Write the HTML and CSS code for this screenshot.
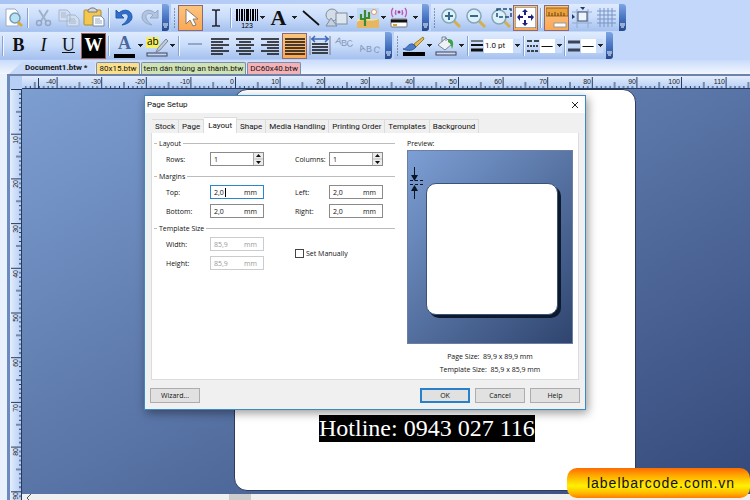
FILE: index.html
```html
<!DOCTYPE html>
<html lang="en">
<head>
    <meta charset="UTF-8">
    <meta name="viewport" content="width=device-width, initial-scale=1.0">
    <title>Page Setup</title>
    <link rel="stylesheet" href="styles.css">
</head>
<body>
    <header class="toolbars">
        <div class="toolbar-row">
            <div class="toolbar">
                <button class="tool" aria-label="Print preview"><svg width="22" height="22" viewBox="0 0 22 22"><path d="M4 2h9l3 3v14H4z" fill="#fff" stroke="#9aabc4"/><circle cx="13" cy="11" r="5" fill="#b5e3f3" stroke="#7899b4" stroke-width="1.5"/><path d="M16 15l4 4" stroke="#d9a93a" stroke-width="2.5"/></svg></button>
                <span class="sep"></span>
                <button class="tool" aria-label="Cut"><svg width="22" height="22" viewBox="0 0 22 22"><path d="M6 3l7 11M15 3L8 14" stroke="#9fb2cc" stroke-width="2"/><circle cx="6" cy="16" r="2.5" fill="none" stroke="#93a6c2" stroke-width="1.5"/><circle cx="15" cy="16" r="2.5" fill="none" stroke="#93a6c2" stroke-width="1.5"/></svg></button>
                <button class="tool" aria-label="Copy"><svg width="22" height="22" viewBox="0 0 22 22"><path d="M1 3h8l3 3v8H1zM9 8h8l4 4v7H9z" fill="#d3dff0" stroke="#a5b6cf"/><path d="M3 6h5M3 8h5M3 10h5M11 12h6M11 14h7M11 16h7" stroke="#a5b6cf"/></svg></button>
                <button class="tool" aria-label="Paste"><svg width="22" height="22" viewBox="0 0 22 22"><rect x="1" y="3" width="17" height="15" rx="1" fill="#f3c84d" stroke="#ae8a38"/><path d="M5 5V3l3-2h3l3 2v2z" fill="#d6d7dc" stroke="#77787d"/><path d="M10 9h8l3 3v7H10z" fill="#fff" stroke="#7489a8"/><path d="M12 12h5M12 14h7M12 16h7" stroke="#93a5c0"/></svg></button>
                <span class="sep"></span>
                <button class="tool" aria-label="Undo"><svg width="22" height="22" viewBox="0 0 22 22"><path d="M2 3v8h8L7 8c4-3 8-1 7 3-1 3-3 5-6 7 6-1 10-4 10-8 0-7-8-9-13-4z" fill="#2f6fcb" stroke="#2259ad"/></svg></button>
                <button class="tool" aria-label="Redo"><svg width="22" height="22" viewBox="0 0 22 22"><path d="M19 3v8h-8l3-3c-4-3-8-1-7 3 1 3 3 5 6 7-6-1-10-4-10-8 0-7 8-9 13-4z" fill="#b2c4de" stroke="#94a9c8"/></svg></button>
                <button class="more" aria-label="Toolbar options"><svg width="7" height="6" viewBox="0 0 7 6"><path d="M1 0h5M1 2h5M2 4h3" stroke="#fff"/></svg></button>
            </div>
            <div class="toolbar">
                <span class="grip"></span>
                <button class="tool active" aria-label="Select"><svg width="22" height="22" viewBox="0 0 22 22"><path d="M6 2v15l4-4 3 6 3-1-3-6h5z" fill="#fff" stroke="#8b7b70"/></svg></button>
                <button class="tool" aria-label="Text select"><svg width="22" height="22" viewBox="0 0 22 22"><path d="M7 3h3l1 1 1-1h3M7 19h3l1-1 1 1h3M11 4v14" fill="none" stroke="#223" stroke-width="1.6"/></svg></button>
                <span class="sep"></span>
                <button class="tool" aria-label="Barcode"><svg width="24" height="22" viewBox="0 0 24 22"><path d="M1 2h2v12H1zM4 2h1v12H4zM6 2h2v12H6zM9 2h1v12H9zM11 2h3v12h-3zM15 2h1v12h-1zM17 2h2v12h-2zM20 2h1v12h-1zM22 2h1v12h-1z"/><text x="12" y="21" text-anchor="middle" class="icon-digits">123</text></svg></button>
                <button class="drop" aria-label="Barcode types"></button>
                <button class="tool letter" aria-label="Text">A</button>
                <button class="drop" aria-label="Text types"></button>
                <button class="tool" aria-label="Line"><svg width="22" height="22" viewBox="0 0 22 22"><path d="M3 4l16 14" stroke="#111" stroke-width="1.7"/></svg></button>
                <button class="tool" aria-label="Shapes"><svg width="24" height="22" viewBox="0 0 24 22"><circle cx="8" cy="8" r="6" fill="#d3dde8" stroke="#7f8d9f"/><path d="M2 19l5-8 6 8z" fill="#c5d1df" stroke="#7f8d9f"/><rect x="12" y="6" width="11" height="11" fill="#dde5ee" stroke="#7f8d9f"/></svg></button>
                <button class="drop" aria-label="Shape types"></button>
                <button class="tool" aria-label="Picture"><svg width="22" height="22" viewBox="0 0 22 22"><rect x="0" y="1" width="22" height="20" fill="#f8dc9c"/><rect x="0" y="1" width="22" height="11" fill="#bfd9f2"/><path d="M0 15c7-4 14 1 22-3v9H0z" fill="#e6b762"/><circle cx="17" cy="5" r="2.5" fill="#fff" stroke="#f08d60"/><path d="M8 19V3M4 7v5h4M12 5v6H8" fill="none" stroke="#398a35" stroke-width="2.2"/></svg></button>
                <button class="drop" aria-label="Picture types"></button>
                <button class="tool" aria-label="Encoder"><svg width="22" height="22" viewBox="0 0 22 22"><path d="M4 1c-2 3-2 6 0 9M7 3c-1 2-1 3 0 5M16 1c2 3 2 6 0 9M13 3c1 2 1 3 0 5" fill="none" stroke="#c05ab8" stroke-width="1.4"/><circle cx="10" cy="5" r="1.5" fill="#a13b98"/><rect x="2" y="12" width="16" height="8" rx="1" fill="#fff" stroke="#777"/><path d="M2 14h16" stroke="#111" stroke-width="3"/><path d="M4 18h4" stroke="#d2a339" stroke-width="2"/></svg></button>
                <button class="drop" aria-label="Encoder types"></button>
                <button class="more push" aria-label="Toolbar options"><svg width="7" height="6" viewBox="0 0 7 6"><path d="M1 0h5M1 2h5M2 4h3" stroke="#fff"/></svg></button>
            </div>
            <div class="toolbar">
                <span class="grip"></span>
                <button class="tool" aria-label="Zoom in"><svg width="22" height="22" viewBox="0 0 22 22"><path d="M13 13l7 7" stroke="#d6ae4c" stroke-width="3"/><circle cx="9" cy="9" r="7" fill="#dcf0f8" stroke="#84a6b8" stroke-width="1.5"/><path d="M5 9h8M9 5v8" stroke="#356a8e" stroke-width="2"/></svg></button>
                <button class="tool" aria-label="Zoom out"><svg width="22" height="22" viewBox="0 0 22 22"><path d="M13 13l7 7" stroke="#d6ae4c" stroke-width="3"/><circle cx="9" cy="9" r="7" fill="#dcf0f8" stroke="#84a6b8" stroke-width="1.5"/><path d="M5 9h8" stroke="#356a8e" stroke-width="2"/></svg></button>
                <button class="tool" aria-label="Zoom to selection"><svg width="22" height="22" viewBox="0 0 22 22"><path d="M13 13l7 7" stroke="#d6ae4c" stroke-width="3"/><circle cx="9" cy="10" r="7" fill="#dcf0f8" stroke="#84a6b8" stroke-width="1.5"/><rect x="7" y="2" width="14" height="8" fill="none" stroke="#234c78" stroke-width="1.5" stroke-dasharray="4 2"/></svg></button>
                <button class="tool active" aria-label="Fit in window"><svg width="21" height="21" viewBox="0 0 21 21"><rect width="21" height="21" fill="#fff" stroke="#555"/><path d="M10 2l3 3h-2v3H9V5H7zM10 19l3-3h-2v-3H9v3H7zM2 10l3-3v2h3v2H5v3zM19 10l-3-3v2h-3v2h3v3z" fill="#20207c"/></svg></button>
                <span class="sep"></span>
                <button class="tool active" aria-label="Rulers"><svg width="22" height="22" viewBox="0 0 22 22"><rect x="0" y="1" width="22" height="8" fill="#e9a13c" stroke="#9b6222"/><path d="M3 5v4M6 6v3M9 5v4M12 6v3M15 5v4M18 6v3" stroke="#6c4113"/><rect x="8" y="16" width="12" height="4" fill="#fff" stroke="#999"/></svg></button>
                <button class="tool" aria-label="Snap"><svg width="22" height="22" viewBox="0 0 22 22"><path d="M6 2v19M17 2v19M1 5h20M1 16h20" stroke="#94a9ce"/><rect x="7" y="5" width="9" height="9" fill="#eef4fd" stroke="#3c4a68"/><path d="M9 0h5l-2 3zM1 7v5l3-2z" fill="#223b6a"/></svg></button>
                <button class="tool" aria-label="Grid"><svg width="22" height="22" viewBox="0 0 22 22"><path d="M4 1v19M8 1v19M12 1v19M16 1v19M1 4h19M1 8h19M1 12h19M1 16h19" stroke="#7994c4"/></svg></button>
                <button class="more" aria-label="Toolbar options"><svg width="7" height="6" viewBox="0 0 7 6"><path d="M1 0h5M1 2h5M2 4h3" stroke="#fff"/></svg></button>
            </div>
        </div>

        <div class="toolbar-row">
            <div class="toolbar">
                <span class="sep"></span>
                <button class="tool format">B</button>
                <button class="tool format thin"><i>I</i></button>
                <button class="tool format thin underline">U</button>
                <button class="tool format inverse">W</button>
                <span class="sep"></span>
                <button class="tool format swatch" aria-label="Text color">A</button>
                <button class="drop" aria-label="Text colors"></button>
                <button class="tool" aria-label="Highlight"><svg width="24" height="22" viewBox="0 0 24 22"><rect x="1" y="2" width="13" height="11" fill="#f4f060"/><text x="2" y="10" class="icon-ab">ab</text><path d="M21 4l-8 9-2 4 4-2 8-9z" fill="#c3cbd5" stroke="#7d8795"/><rect x="2" y="18" width="20" height="3" fill="#bfd3f5" stroke="#445"/></svg></button>
                <button class="drop" aria-label="Highlight colors"></button>
                <span class="sep"></span>
                <button class="tool" aria-label="Rule"><svg width="22" height="22" viewBox="0 0 22 22"><path d="M4 9h14" stroke="#7d93bb" stroke-width="1.5"/></svg></button>
                <button class="tool" aria-label="Align left"><svg width="22" height="22" viewBox="0 0 22 22"><path d="M2 4h18M2 7h12M2 10h18M2 13h12M2 16h18M2 19h12" stroke="#111" stroke-width="1.5"/></svg></button>
                <button class="tool" aria-label="Align center"><svg width="22" height="22" viewBox="0 0 22 22"><path d="M2 4h18M5 7h12M2 10h18M5 13h12M2 16h18M5 19h12" stroke="#111" stroke-width="1.5"/></svg></button>
                <button class="tool" aria-label="Align right"><svg width="22" height="22" viewBox="0 0 22 22"><path d="M2 4h18M8 7h12M2 10h18M8 13h12M2 16h18M8 19h12" stroke="#111" stroke-width="1.5"/></svg></button>
                <button class="tool active" aria-label="Justify"><svg width="22" height="22" viewBox="0 0 22 22"><path d="M1 4h20M1 7h20M1 10h20M1 13h20M1 16h20M1 19h20" stroke="#111" stroke-width="1.5"/></svg></button>
                <button class="tool" aria-label="Fit width"><svg width="22" height="22" viewBox="0 0 22 22"><path d="M1 1v19M21 1v19" stroke="#778"/><path d="M2 4h18M6 1L3 4l3 3M16 1l3 3-3 3" fill="none" stroke="#3b67bd" stroke-width="1.5"/><path d="M3 9h16M3 12h16M3 15h16M3 18h16" stroke="#111" stroke-width="1.5"/></svg></button>
                <button class="tool" aria-label="Arc text down"><svg width="22" height="22" viewBox="0 0 22 22" class="icon-arc"><text x="1" y="8" transform="rotate(14 1 8)">A</text><text x="7" y="11">B</text><text x="13" y="12" transform="rotate(-8 13 12)">C</text></svg></button>
                <button class="tool" aria-label="Arc text up"><svg width="22" height="22" viewBox="0 0 22 22" class="icon-arc"><text x="1" y="17" transform="rotate(-18 1 17)">A</text><text x="7" y="17">B</text><text x="14" y="17" transform="rotate(12 14 17)">C</text></svg></button>
                <button class="more push" aria-label="Toolbar options"><svg width="7" height="6" viewBox="0 0 7 6"><path d="M1 0h5M1 2h5M2 4h3" stroke="#fff"/></svg></button>
            </div>
            <div class="toolbar">
                <span class="grip"></span>
                <button class="tool" aria-label="Line color"><svg width="24" height="22" viewBox="0 0 24 22"><path d="M12 9l9-7 1 2-8 8z" fill="#e6bb55" stroke="#9e7a2c"/><path d="M1 14c4 0 5-6 10-5l3 3c-3 4-8 4-13 2z" fill="#4d7cc6" stroke="#305a9e"/><path d="M1 17h22v4H1z"/></svg></button>
                <button class="drop" aria-label="Line colors"></button>
                <button class="tool" aria-label="Fill color"><svg width="24" height="22" viewBox="0 0 24 22"><path d="M4 10l8-7 6 6-7 6z" fill="#eef2f6" stroke="#7a8797"/><path d="M8 7V2h4v4" fill="none" stroke="#7a8797"/><path d="M14 4c6 0 6 5 4 10-1-5-2-6-4-7z" fill="#3da14b"/><rect x="2" y="17" width="20" height="3" fill="#c8daf7" stroke="#445"/></svg></button>
                <button class="drop" aria-label="Fill colors"></button>
                <span class="sep"></span>
                <label class="combo">
                    <svg width="12" height="14" viewBox="0 0 12 14"><path d="M0 2h12" stroke="#111"/><path d="M0 6h12" stroke="#111" stroke-width="2"/><path d="M0 11h12" stroke="#111" stroke-width="3"/></svg>
                    <select class="wide" aria-label="Line thickness"><option>1.0 pt</option></select>
                </label>
                <span class="sep"></span>
                <label class="combo">
                    <svg width="12" height="14" viewBox="0 0 12 14"><path d="M0 2h12" stroke="#111" stroke-width="1.5" stroke-dasharray="5 2"/><path d="M0 7h12" stroke="#111" stroke-width="1.5" stroke-dasharray="2 1"/><path d="M0 12h12" stroke="#111" stroke-width="1.5" stroke-dasharray="3 1"/></svg>
                    <select aria-label="Dash style"><option>—</option></select>
                </label>
                <span class="sep"></span>
                <label class="combo">
                    <svg width="12" height="14" viewBox="0 0 12 14"><path d="M0 3h12M0 11h12" stroke="#3c4558" stroke-width="3"/></svg>
                    <select aria-label="Compound style"><option>—</option></select>
                </label>
                <button class="more push" aria-label="Toolbar options"><svg width="7" height="6" viewBox="0 0 7 6"><path d="M1 0h5M1 2h5M2 4h3" stroke="#fff"/></svg></button>
            </div>
        </div>
    </header>

    <nav class="doc-tabs">
        <a href="#" class="doc-tab current">Document1.btw *</a>
        <a href="#" class="doc-tab yellow">80x15.btw</a>
        <a href="#" class="doc-tab green">tem dán thùng an thành.btw</a>
        <a href="#" class="doc-tab red">DC60x40.btw</a>
    </nav>

    <main class="workspace">
        <div class="corner"></div>
        <svg class="ruler ruler-top">
            <defs>
                <pattern id="ticks-h" x="34.6" width="44.6" height="13" patternUnits="userSpaceOnUse">
                    <path d="M.5 1v12M4.9 10v3M9.4 10v3M13.8 10v3M18.3 10v3M22.8 6v7M27.2 10v3M31.7 10v3M36.1 10v3M40.6 10v3" stroke="#263a5e"/>
                </pattern>
            </defs>
            <rect width="100%" height="13" fill="url(#ticks-h)"/>
            <path d="M16.5 2v11M0 12.5h3000" stroke="#263a5e"/>
            <g text-anchor="end">
                <text x="34" y="8">-40</text><text x="79" y="8">-30</text><text x="123" y="8">-20</text><text x="168" y="8">-10</text>
                <text x="212" y="8">0</text><text x="257" y="8">10</text><text x="302" y="8">20</text><text x="346" y="8">30</text>
                <text x="391" y="8">40</text><text x="435" y="8">50</text><text x="480" y="8">60</text><text x="525" y="8">70</text>
                <text x="569" y="8">80</text><text x="614" y="8">90</text><text x="658" y="8">100</text><text x="703" y="8">110</text>
            </g>
        </svg>
        <svg class="ruler ruler-side">
            <defs>
                <pattern id="ticks-v" width="12" height="44.7" patternUnits="userSpaceOnUse">
                    <path d="M1 .5h11M9 4.9h3M9 9.4h3M9 13.8h3M9 18.3h3M6 22.8h6M9 27.2h3M9 31.7h3M9 36.1h3M9 40.6h3" stroke="#263a5e"/>
                </pattern>
            </defs>
            <rect width="12" height="100%" fill="url(#ticks-v)"/>
            <path d="M11.5 0v3000" stroke="#263a5e"/>
            <g text-anchor="end">
                <text transform="translate(8 47) rotate(-90)">10</text><text transform="translate(8 91) rotate(-90)">20</text>
                <text transform="translate(8 136) rotate(-90)">30</text><text transform="translate(8 181) rotate(-90)">40</text>
                <text transform="translate(8 225) rotate(-90)">50</text><text transform="translate(8 270) rotate(-90)">60</text>
                <text transform="translate(8 315) rotate(-90)">70</text><text transform="translate(8 359) rotate(-90)">80</text>
                <text transform="translate(8 403) rotate(-90)">90</text>
            </g>
        </svg>

        <div class="canvas">
            <div class="label-page">
                <p class="hotline">Hotline: 0943 027 116</p>
            </div>

            <section class="dialog" role="dialog" aria-labelledby="dialog-title">
                <div class="title-bar">
                    <h1 id="dialog-title">Page Setup</h1>
                    <button class="close" aria-label="Close"><svg width="8" height="8" viewBox="0 0 8 8"><path d="M1 1l6 6M7 1L1 7" stroke="#222"/></svg></button>
                </div>

                <div class="tabs" role="tablist">
                    <button role="tab">Stock</button>
                    <button role="tab">Page</button>
                    <button role="tab" aria-selected="true" class="selected">Layout</button>
                    <button role="tab">Shape</button>
                    <button role="tab">Media Handling</button>
                    <button role="tab">Printing Order</button>
                    <button role="tab">Templates</button>
                    <button role="tab">Background</button>
                </div>

                <div class="panel">
                    <form class="settings">
                        <fieldset>
                            <legend>Layout</legend>
                            <div class="fields">
                                <label for="rows">Rows:</label>
                                <div class="field">
                                    <input type="text" id="rows" value="1">
                                    <span class="spin"><svg width="9" height="12" viewBox="0 0 9 12"><path d="M0 6h9" stroke="#bbb"/><path d="M2 4l2.5-3L7 4zM2 8l2.5 3L7 8z" fill="#111"/></svg></span>
                                </div>
                                <label for="columns">Columns:</label>
                                <div class="field">
                                    <input type="text" id="columns" value="1">
                                    <span class="spin"><svg width="9" height="12" viewBox="0 0 9 12"><path d="M0 6h9" stroke="#bbb"/><path d="M2 4l2.5-3L7 4zM2 8l2.5 3L7 8z" fill="#111"/></svg></span>
                                </div>
                            </div>
                        </fieldset>
                        <fieldset>
                            <legend>Margins</legend>
                            <div class="fields">
                                <label for="top">Top:</label>
                                <div class="field focused"><input type="text" id="top" value="2,0"><span class="caret"></span><span class="unit">mm</span></div>
                                <label for="left">Left:</label>
                                <div class="field"><input type="text" id="left" value="2,0"><span class="unit">mm</span></div>
                                <label for="bottom">Bottom:</label>
                                <div class="field"><input type="text" id="bottom" value="2,0"><span class="unit">mm</span></div>
                                <label for="right">Right:</label>
                                <div class="field"><input type="text" id="right" value="2,0"><span class="unit">mm</span></div>
                            </div>
                        </fieldset>
                        <fieldset>
                            <legend>Template Size</legend>
                            <div class="fields">
                                <label for="width">Width:</label>
                                <div class="field disabled"><input type="text" id="width" value="85,9" disabled><span class="unit">mm</span></div>
                                <label class="check"><input type="checkbox">Set Manually</label>
                                <label for="height">Height:</label>
                                <div class="field disabled"><input type="text" id="height" value="85,9" disabled><span class="unit">mm</span></div>
                            </div>
                        </fieldset>
                    </form>

                    <div class="preview">
                        <h2>Preview:</h2>
                        <div class="preview-box">
                            <svg class="margin-mark" width="14" height="32" viewBox="0 0 14 32"><path d="M4.5 0v9M4.5 23v9" stroke="#0b1524"/><path d="M1 8h7l-3.5 6zM1 24h7l-3.5-6z" fill="#0b1524"/><path d="M0 13.5h14M0 17.5h14" stroke="#0b1524" stroke-dasharray="3 2"/></svg>
                            <div class="preview-label"></div>
                        </div>
                        <p>Page Size:&nbsp; 89,9 x 89,9 mm</p>
                        <p>Template Size:&nbsp; 85,9 x 85,9 mm</p>
                    </div>
                </div>

                <div class="actions">
                    <button>Wizard...</button>
                    <button class="default">OK</button>
                    <button>Cancel</button>
                    <button>Help</button>
                </div>
            </section>
        </div>

        <div class="scrollbar">
            <svg width="6" height="6" viewBox="0 0 6 6"><path d="M5 0L1 4l4 4" fill="none" stroke="#555"/></svg>
            <span class="thumb"></span>
        </div>
    </main>

    <a class="site-badge" href="#">labelbarcode.com.vn</a>
</body>
</html>
```

FILE: styles.css
```css
* {
    box-sizing: border-box;
}
body {
    margin: 0;
    height: 100vh;
    display: flex;
    flex-direction: column;
    overflow: hidden;
    background-color: #e9f1fd;
    font-family: "Open Sans", "Noto Sans", sans-serif;
    font-size: 7px;
    color: #111;
}
button, input, select {
    font: inherit;
    color: inherit;
    margin: 0;
    padding: 0;
    border: none;
    background: none;
}
a {
    color: inherit;
    text-decoration: none;
}

/* toolbars */
.toolbars {
    padding-top: 4px;
    padding-bottom: 1px;
    background: linear-gradient(90deg, #a9c3f3, #c3d7fb 70%);
    display: flex;
    flex-direction: column;
    gap: 1px;
}
.toolbar-row {
    display: flex;
    gap: 2px;
}
.toolbar {
    display: flex;
    align-items: center;
    height: 27px;
    background: linear-gradient(#dfebfe, #c9dcfa 50%, #a5c1ee);
    border-radius: 0 3px 3px 0;
}
.tool {
    width: 25px;
    height: 26px;
    display: flex;
    align-items: center;
    justify-content: center;
    flex-shrink: 0;
}
.tool svg {
    flex-shrink: 0;
}
.tool.active {
    border: 1px solid #8a6a74;
    background: linear-gradient(#fcc47e, #fba755);
}
.sep {
    width: 6px;
    height: 20px;
    background: linear-gradient(90deg, #86a3d4 1px, #f3f8ff 1px) center / 2px 100% no-repeat;
}
.grip {
    width: 7px;
    height: 22px;
    background: radial-gradient(circle, #35496f 1px, transparent 1px) center / 3px 3px repeat-y;
}
.drop {
    width: 7px;
    height: 26px;
    background: conic-gradient(from 315deg at 50% 100%, #222 90deg, transparent 90deg) center / 5px 3px no-repeat;
}
.more {
    width: 7px;
    height: 27px;
    padding-bottom: 2px;
    display: flex;
    align-items: flex-end;
    background: linear-gradient(#7ea5e4, #3f6cbb 60%, #26488c);
    border-radius: 0 3px 3px 0;
}
.more.push {
    margin-left: 3px;
}
.letter, .format {
    font-family: "Liberation Serif", serif;
    font-weight: bold;
    font-size: 18px;
}
.letter {
    font-size: 22px;
}
.thin {
    font-weight: normal;
}
.underline {
    text-decoration: underline;
}
.inverse {
    background-color: #000;
    color: #fff;
    border: 1px solid #a45f4f;
}
.swatch {
    color: #48689c;
    line-height: 17px;
    background: linear-gradient(#000, #000) center 21px / 21px 4px no-repeat;
    padding-bottom: 5px;
}
.icon-digits {
    font: 7px "Liberation Sans", sans-serif;
}
.icon-ab {
    font: 10px "Open Sans", sans-serif;
}
.icon-arc {
    font: 9px "Liberation Sans", sans-serif;
    fill: #8095b8;
}
.combo {
    display: flex;
    align-items: center;
    gap: 1px;
}
.combo select {
    appearance: none;
    width: 22px;
    height: 14px;
    font-size: 12px;
    line-height: 14px;
    padding-left: 1px;
    background: conic-gradient(from 315deg at 50% 100%, #222 90deg, transparent 90deg) 17px center / 5px 3px no-repeat, linear-gradient(90deg, #fff 15px, #c9dcfa 15px);
}
.combo .wide {
    width: 37px;
    font-family: Roboto, sans-serif;
    font-size: 8px;
    background: conic-gradient(from 315deg at 50% 100%, #222 90deg, transparent 90deg) 31px center / 5px 3px no-repeat, linear-gradient(90deg, #fff 29px, #c9dcfa 29px);
}

/* document tabs */
.doc-tabs {
    display: flex;
    align-items: flex-end;
    gap: 1px;
    height: 14px;
    padding-left: 9px;
    background: linear-gradient(#c9dcfb, #f1f6fe);
    font-family: Roboto, sans-serif;
    font-size: 8px;
}
.doc-tab {
    height: 12px;
    line-height: 11px;
    padding: 0 2px;
    border: 1px solid #7b8eae;
    border-bottom: none;
    border-radius: 2px 2px 0 0;
}
.current {
    padding: 0 8px 0 16px;
    background-color: #c6d9f8;
    border: none;
    font-weight: bold;
    clip-path: polygon(13px 0, 100% 0, 100% 100%, 0 100%);
}
.yellow {
    background-color: #fbe08c;
}
.green {
    background-color: #cfe2b4;
}
.red {
    background-color: #f5b1b6;
}

/* workspace */
.workspace {
    flex: 1;
    min-height: 0;
    margin-left: 7px;
    border-left: 3px solid #6e8bbd;
    border-top: 2px solid #6e83aa;
    display: grid;
    grid-template-columns: 12px 1fr;
    grid-template-rows: 13px 1fr 6px;
}
.corner {
    background-color: #b8cff5;
}
.ruler {
    display: block;
    background: linear-gradient(#e3edfd, #b3ccf4);
    font-family: "Liberation Sans", sans-serif;
    font-size: 7px;
    fill: #222;
}
.ruler-top {
    width: 100%;
    height: 13px;
}
.ruler-side {
    grid-row: 2 / 4;
    width: 12px;
    height: 100%;
    background: linear-gradient(90deg, #e3edfd, #b3ccf4);
}
.canvas {
    position: relative;
    overflow: hidden;
    background: linear-gradient(150deg, #7d9ed1, #34497a);
}
.label-page {
    position: absolute;
    left: 212px;
    top: 0;
    width: 402px;
    height: 402px;
    padding-top: 325px;
    background-color: #fff;
    border: 1px solid #2c3d5c;
    border-radius: 13px;
}
.hotline {
    width: max-content;
    margin: 0 0 0 84px;
    background-color: #000;
    color: #fff;
    font-family: "Liberation Serif", serif;
    font-size: 24px;
    line-height: 27px;
}
.scrollbar {
    grid-column: 2;
    display: flex;
    background-color: #f0f0f0;
    padding-left: 4px;
}
.thumb {
    width: 22px;
    margin-left: 197px;
    background-color: #cdcdcd;
}

/* page setup dialog */
.dialog {
    position: absolute;
    left: 122px;
    top: 6px;
    width: 442px;
    background-color: #f0f0f0;
    border: 1px solid #3c8ac4;
    box-shadow: 2px 3px 9px rgba(0, 0, 0, 0.4);
}
.title-bar {
    display: flex;
    justify-content: space-between;
    align-items: center;
    height: 17px;
    padding: 0 6px 0 2px;
    background-color: #fff;
}
.title-bar h1 {
    margin: 0;
    font-family: Roboto, sans-serif;
    font-size: 8px;
    font-weight: normal;
}
.close {
    display: flex;
}
.tabs {
    display: flex;
    align-items: flex-end;
    height: 20px;
    padding-left: 7px;
    font-family: Roboto, sans-serif;
    font-size: 8px;
}
.tabs button {
    height: 14px;
    padding: 0 3px;
    line-height: 12px;
    border: 1px solid #dcdcdc;
    border-bottom: none;
    border-left: none;
}
.tabs .selected {
    height: 16px;
    padding: 0 4px;
    background-color: #fff;
}
.panel {
    display: flex;
    justify-content: space-between;
    height: 247px;
    margin: 0 6px;
    padding: 5px 5px 0 2px;
    background-color: #fff;
    border: 1px solid #dcdcdc;
    border-top: none;
}
.settings {
    width: 241px;
}
fieldset {
    margin: 0 0 5px;
    padding: 3px 0 0;
    border: none;
    border-top: 1px solid #bcbcbc;
}
legend {
    height: 11px;
    line-height: 11px;
    margin-left: 3px;
    padding: 0 2px;
}
.fields {
    display: grid;
    grid-template-columns: 44px 85px 34px 54px;
    row-gap: 5px;
    align-items: center;
    padding-left: 12px;
}
.field {
    display: flex;
    align-items: center;
    width: 54px;
    height: 14px;
    padding-left: 3px;
    border: 1px solid #8a8a8a;
}
.field input {
    flex: 1;
    min-width: 0;
    height: 12px;
    outline: none;
}
.focused {
    border-color: #2a86c8;
}
.focused input {
    flex: none;
    width: 11px;
}
.caret {
    width: 1px;
    height: 9px;
    background-color: #000;
}
.unit {
    margin-left: auto;
    padding-right: 6px;
}
.spin {
    display: flex;
    background-color: #ececec;
    border-left: 1px solid #aaa;
}
.disabled {
    color: #999;
    border-color: #ccc;
}
.check {
    grid-column: 3 / 5;
    grid-row: 1 / 3;
    display: flex;
    align-items: center;
    gap: 2px;
}
.check input {
    appearance: none;
    width: 9px;
    height: 9px;
    border: 1px solid #444;
}
.preview {
    width: 166px;
    text-align: center;
}
.preview h2 {
    margin: 0 0 1px;
    font-size: 7px;
    font-weight: normal;
    line-height: 11px;
    text-align: left;
}
.preview p {
    margin: 0;
    line-height: 13px;
}
.preview-box {
    display: flex;
    align-items: flex-start;
    height: 194px;
    margin-bottom: 6px;
    padding: 16px 0 0 2px;
    border: 1px solid #6b7fa3;
    background: linear-gradient(135deg, #7d9fd5, #2f456f);
}
.preview-label {
    width: 132px;
    height: 132px;
    margin: 16px 0 0 2px;
    background-color: #fff;
    border: 1px solid #3b5379;
    border-radius: 10px;
    box-shadow: 3px 3px 0 #0d1a2e;
}
.actions {
    display: flex;
    gap: 5px;
    padding: 8px 5px 6px;
}
.actions button {
    width: 50px;
    height: 15px;
    background-color: #e1e1e1;
    border: 1px solid #adadad;
}
.actions button:first-child {
    margin-right: auto;
}
.actions .default {
    border: 2px solid #2780c8;
}

/* site link over the bottom right corner */
.site-badge {
    position: fixed;
    right: 0;
    bottom: 2px;
    width: 183px;
    padding-left: 5px;
    line-height: 30px;
    border-radius: 10px;
    text-align: center;
    font-family: "Liberation Sans", sans-serif;
    font-size: 14px;
    letter-spacing: 1px;
    background: linear-gradient(#ff6a00, #ffa800 25%, #fff200 60%, #ffb400 85%, #ff7a00);
}
```
